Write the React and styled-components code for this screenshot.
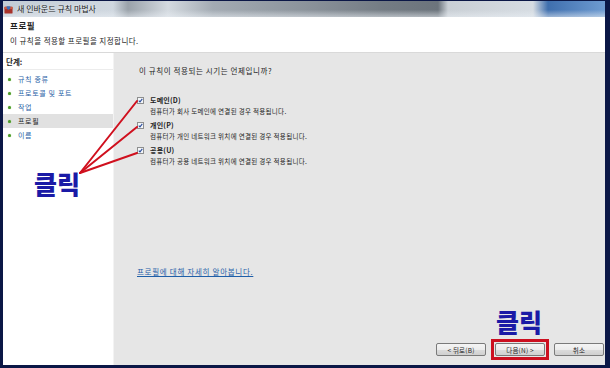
import React from "react";
import styled, { createGlobalStyle } from "styled-components";

const GlobalStyle = createGlobalStyle`
  html, body {
    margin: 0;
    padding: 0;
    background: #0b1746;
  }
  body {
    font-family: "Noto Sans CJK KR", "Noto Sans", sans-serif;
    color: #1e1e1e;
  }
`;

const steps = [
  { label: "규칙 종류" },
  { label: "프로토콜 및 포트" },
  { label: "작업" },
  { label: "프로필", active: true },
  { label: "이름" },
];

const profiles = [
  { name: "도메인(D)", desc: "컴퓨터가 회사 도메인에 연결된 경우 적용됩니다." },
  { name: "개인(P)", desc: "컴퓨터가 개인 네트워크 위치에 연결된 경우 적용됩니다." },
  { name: "공용(U)", desc: "컴퓨터가 공용 네트워크 위치에 연결된 경우 적용됩니다." },
];

const WindowIcon = () => (
  <svg width="9" height="9" viewBox="0 0 10 10">
    <rect x="0.5" y="2" width="9" height="7.5" rx="1" fill="#a8322a" />
    <rect x="0.5" y="2" width="9" height="2.5" fill="#d25a3c" />
    <path d="M3 1.5 L7 1.5 L7 4 L5 5.5 L3 4 Z" fill="#3a6fb8" />
  </svg>
);

const CheckMark = () => (
  <svg width="7" height="7" viewBox="0 0 7 7">
    <rect x="0.5" y="0.5" width="6" height="6" fill="#f4f6f8" stroke="#8e8f8f" />
    <path d="M1.8 3.6 L3 4.9 L5.3 1.9" fill="none" stroke="#2b4d9c" strokeWidth="1.1" />
  </svg>
);

export default function App() {
  return (
    <>
      <GlobalStyle />
      <Frame>
        <TitleBar>
          <WindowIcon />
          <TitleText>새 인바운드 규칙 마법사</TitleText>
        </TitleBar>
        <Header>
          <PageTitle>프로필</PageTitle>
          <PageSubtitle>이 규칙을 적용할 프로필을 지정합니다.</PageSubtitle>
        </Header>
        <Body>
          <Sidebar>
            <StepsHeader>단계:</StepsHeader>
            {steps.map((s) => (
              <StepItem key={s.label} $active={s.active}>
                <Bullet />
                {s.label}
              </StepItem>
            ))}
          </Sidebar>
          <Panel>
            <Question>이 규칙이 적용되는 시기는 언제입니까?</Question>
            <Options>
              {profiles.map((p) => (
                <Option key={p.name}>
                  <OptionLabel>
                    <CheckMark />
                    {p.name}
                  </OptionLabel>
                  <OptionDesc>{p.desc}</OptionDesc>
                </Option>
              ))}
            </Options>
            <HelpLink>프로필에 대해 자세히 알아봅니다.</HelpLink>
            <ButtonRow>
              <Button>&lt; 뒤로(B)</Button>
              <Marker>
                <Button>다음(N) &gt;</Button>
              </Marker>
              <Button>취소</Button>
            </ButtonRow>
          </Panel>
        </Body>

        <Annotations width="610" height="368" viewBox="0 0 610 368">
          <g stroke="#d0101e" strokeWidth="2" strokeLinecap="round">
            <line x1="80" y1="173" x2="137" y2="101" />
            <line x1="80" y1="173" x2="137" y2="127" />
            <line x1="80" y1="173" x2="137" y2="153" />
          </g>
        </Annotations>
        <ClickNote $left={34} $top={168}>클릭</ClickNote>
        <ClickNote $left={496} $top={306}>클릭</ClickNote>
      </Frame>
    </>
  );
}

const Frame = styled.div`
  position: relative;
  width: 610px;
  height: 368px;
  box-sizing: border-box;
  padding: 1px 5px 3px 3px;
  background: #0b1746;
  display: flex;
  flex-direction: column;
  overflow: hidden;
`;

const TitleBar = styled.div`
  height: 16px;
  flex-shrink: 0;
  display: flex;
  align-items: center;
  gap: 4px;
  padding-left: 1px;
  background:
    linear-gradient(to bottom, rgba(255, 255, 255, 0) 0, rgba(255, 255, 255, 0) 55%, rgba(235, 240, 245, 0.55) 100%),
    linear-gradient(
      to right,
      #c3ccd6 0,
      #cfd7df 110px,
      #9aa2aa 125px,
      #d4dae0 165px,
      #a3abb3 210px,
      #8c949c 300px,
      #747c84 380px,
      #6c747c 435px,
      #c9cfd5 445px,
      #d6dce2 530px,
      #3f6fae 545px,
      #6d9ad0 600px
    );
`;

const TitleText = styled.span`
  font-size: 8px;
  color: #1c1c1c;
  text-shadow: 0 0 3px rgba(255, 255, 255, 0.9);
  line-height: 1;
`;

const Header = styled.header`
  height: 36px;
  flex-shrink: 0;
  box-sizing: border-box;
  padding: 2px 0 0 7px;
  background: #fff;
  border-bottom: 1px solid #d9d9d9;
`;

const PageTitle = styled.div`
  font-size: 8.5px;
  font-weight: 700;
  line-height: 12px;
  letter-spacing: 0.6px;
`;

const PageSubtitle = styled.div`
  margin-top: 4px;
  font-size: 7.5px;
  line-height: 12px;
  letter-spacing: 0.45px;
`;

const Body = styled.div`
  flex: 1;
  display: flex;
  min-height: 0;
`;

const Sidebar = styled.nav`
  width: 110px;
  flex-shrink: 0;
  background: #fff;
  display: flex;
  flex-direction: column;
`;

const StepsHeader = styled.div`
  font-size: 7.5px;
  font-weight: 700;
  line-height: 12px;
  padding: 3px 0 0 3px;
  height: 13px;
  border-bottom: 1px solid #ececec;
  margin-bottom: 2px;
`;

const StepItem = styled.div`
  display: flex;
  align-items: center;
  gap: 7px;
  height: 14px;
  padding-left: 5px;
  font-size: 7px;
  letter-spacing: 0.65px;
  color: ${(p) => (p.$active ? "#1e1e1e" : "#2a62a6")};
  background: ${(p) => (p.$active ? "#e1e1e1" : "transparent")};
`;

const Bullet = styled.span`
  width: 3px;
  height: 3px;
  border-radius: 50%;
  background: #4c9a2a;
  box-shadow: 0 0 1px #7cc04e;
`;

const Panel = styled.main`
  flex: 1;
  display: flex;
  flex-direction: column;
  background: #e6e6e6;
  border-left: 1px solid #f3f3f3;
  padding: 12px 1px 9px 23px;
`;

const Question = styled.div`
  margin-left: 2px;
  font-size: 7.5px;
  line-height: 12px;
  letter-spacing: 0.6px;
`;

const Options = styled.div`
  margin-top: 17px;
  display: flex;
  flex-direction: column;
  gap: 3px;
`;

const Option = styled.div`
  display: flex;
  flex-direction: column;
`;

const OptionLabel = styled.label`
  display: flex;
  align-items: center;
  gap: 6px;
  height: 12px;
  font-size: 7px;
  font-weight: 700;
  letter-spacing: 0.2px;
`;

const OptionDesc = styled.div`
  margin-left: 13px;
  font-size: 6.5px;
  line-height: 10px;
  letter-spacing: 0.3px;
`;

const HelpLink = styled.a`
  margin-top: 100px;
  font-size: 7.5px;
  line-height: 12px;
  letter-spacing: 0.7px;
  color: #1f5fa8;
  text-decoration: underline;
  align-self: flex-start;
`;

const ButtonRow = styled.div`
  margin-top: auto;
  display: flex;
  justify-content: flex-end;
  align-items: center;
  gap: 9px;
`;

const Marker = styled.span`
  display: flex;
  margin: -4px;
  padding: 1px;
  border: 3px solid #cc1020;
`;

const Button = styled.button`
  width: 50px;
  height: 13px;
  padding: 0;
  font-family: inherit;
  font-size: 6.5px;
  letter-spacing: 0.2px;
  color: #1e1e1e;
  border: 1px solid #7a7a7a;
  border-radius: 2px;
  background: linear-gradient(to bottom, #f4f4f4 0, #ececec 50%, #dcdcdc 51%, #d0d0d0 100%);
`;

const Annotations = styled.svg`
  position: absolute;
  left: 0;
  top: 0;
  pointer-events: none;
`;

const ClickNote = styled.span`
  position: absolute;
  left: ${(p) => p.$left}px;
  top: ${(p) => p.$top}px;
  font-size: 25px;
  font-weight: 900;
  line-height: 1.2;
  color: #1a1aa6;
`;
